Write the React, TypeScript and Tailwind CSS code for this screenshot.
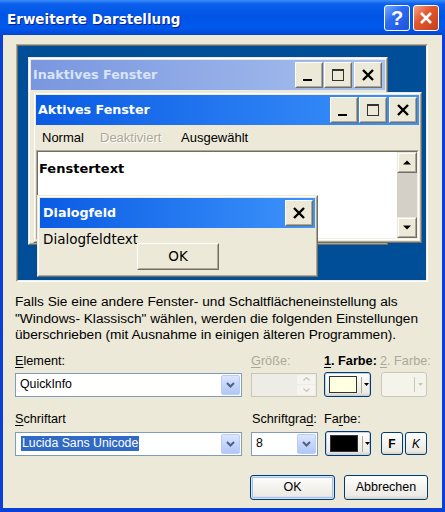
import React from "react";

const DV = "font-['DejaVu_Sans',Verdana,sans-serif]";

function CapBtn({ kind }: { kind: "min" | "max" | "close" }) {
  return (
    <div className="w-[28px] h-[26px] border border-white border-r-[#716F64] border-b-[#716F64]">
      <div className="w-full h-full border border-[#ECE9D8] border-r-[#ACA899] border-b-[#ACA899] bg-[#ECE9D8] flex items-center justify-center">
        <svg width="14" height="14" viewBox="0 0 14 14">
          {kind === "min" && <rect x="1" y="11" width="9" height="2" fill="#000" />}
          {kind === "max" && (
            <>
              <rect x="1.5" y="1.5" width="11" height="11" fill="none" stroke="#333" strokeWidth="1" />
              <rect x="1" y="1" width="12" height="2" fill="#333" />
            </>
          )}
          {kind === "close" && <path d="M2 2L12 12M12 2L2 12" stroke="#000" strokeWidth="2.4" />}
        </svg>
      </div>
    </div>
  );
}

function Frame({ pos, children }: { pos: string; children: React.ReactNode }) {
  return (
    <div className={`absolute ${pos} border border-[#ECE9D8] border-r-[#716F64] border-b-[#716F64]`}>
      <div className="h-full border border-white border-r-[#ACA899] border-b-[#ACA899] bg-[#ECE9D8] p-[1px] flex flex-col">
        {children}
      </div>
    </div>
  );
}

function ScrollBtn({ up }: { up?: boolean }) {
  return (
    <div className="w-[20px] h-[21px] border border-[#ECE9D8] border-r-[#716F64] border-b-[#716F64]">
      <div className="w-full h-full border border-white border-r-[#ACA899] border-b-[#ACA899] bg-[#ECE9D8] flex items-center justify-center">
        <svg width="8" height="5" viewBox="0 0 8 5">
          {up ? <path d="M0 4.5L4 0.5L8 4.5Z" fill="#000" /> : <path d="M0 0.5L4 4.5L8 0.5Z" fill="#000" />}
        </svg>
      </div>
    </div>
  );
}

function DropBtn() {
  return (
    <div className="w-[19px] h-full rounded-[2px] border border-[#BBCDF6] bg-[linear-gradient(180deg,#DCE6FE_0%,#C4D5FB_50%,#B3C7F6_100%)] flex items-center justify-center">
      <svg width="9" height="6" viewBox="0 0 9 6">
        <path d="M1 1L4.5 4.5L8 1" fill="none" stroke="#4D6185" strokeWidth="2" />
      </svg>
    </div>
  );
}

function Combo({ w, children }: { w: string; children: React.ReactNode }) {
  return (
    <div className={`${w} h-[24px] border border-[#7F9DB9] bg-white flex items-stretch p-[1px] text-[12.3px]`}>
      <div className="flex-1 pl-[3px] flex items-center">{children}</div>
      <DropBtn />
    </div>
  );
}

function XpBtn({ w, h, children, def }: { w: string; h: string; children: React.ReactNode; def?: boolean }) {
  return (
    <div
      className={`${w} ${h} rounded-[3px] border border-[#003C74] bg-[linear-gradient(180deg,#FFFFFF_0%,#F4F3EE_45%,#ECEBE6_85%,#D6D0C5_100%)] flex items-center justify-center ${
        def ? "shadow-[inset_0_0_0_1px_#CEE7FF,inset_0_0_0_2px_#A5C0EE]" : ""
      }`}
    >
      {children}
    </div>
  );
}

function ColorBtn({ w, color, disabled }: { w: string; color?: string; disabled?: boolean }) {
  if (disabled) {
    return (
      <div className={`${w} h-[25px] rounded-[3px] border border-[#C9C7BA] bg-[#F5F4EA] flex items-center justify-end pr-[3px]`}>
        <div className="w-px h-[15px] bg-[#C9C7BA] mr-[3px]" />
        <svg width="5" height="3" viewBox="0 0 5 3">
          <path d="M0 0L5 0L2.5 3Z" fill="#C9C7BA" />
        </svg>
      </div>
    );
  }
  return (
    <div className={`${w} h-[25px] rounded-[3px] border border-[#003C74] bg-[linear-gradient(180deg,#FFFFFF_0%,#F4F3EE_45%,#ECEBE6_85%,#D6D0C5_100%)] shadow-[inset_0_0_0_1px_#C8D2E4] flex items-center pl-[4px]`}>
      <div className="w-[28px] h-[17px] border border-[#333]" style={{ background: color }} />
      <div className="w-px h-[16px] bg-[#ACA899] ml-[4px] mr-[2px]" />
      <svg width="5" height="3" viewBox="0 0 5 3">
        <path d="M0 0L5 0L2.5 3Z" fill="#000" />
      </svg>
    </div>
  );
}

const U = ({ children }: { children: React.ReactNode }) => <span className="underline underline-offset-[2px]">{children}</span>;

export default function App() {
  return (
    <div className="w-[445px] h-[512px] flex flex-col bg-[#0A3FD8] font-['Liberation_Sans',Arial,sans-serif] text-[13px] text-black overflow-hidden">
      {/* Title bar */}
      <div className="h-[35px] shrink-0 flex items-center pl-[7px] pr-[6px] bg-[linear-gradient(180deg,#3A8CF9_0%,#0A5FEC_12%,#0055E5_45%,#0058EC_80%,#0048D4_100%)]">
        <span className={`${DV} flex-1 mt-[3px] text-white font-bold text-[13.5px] [text-shadow:1px_1px_0_#0A1E8C]`}>Erweiterte Darstellung</span>
        <div className="flex gap-[3px]">
          <div className="w-[26px] h-[26px] rounded-[3px] border border-white bg-[linear-gradient(135deg,#7AAEFF_0%,#2E6CF2_40%,#1C52DA_100%)] flex items-center justify-center">
            <span className="text-white font-bold text-[20px] leading-none">?</span>
          </div>
          <div className="w-[26px] h-[26px] rounded-[3px] border border-white bg-[linear-gradient(135deg,#F5A585_0%,#E3582F_40%,#C53F1A_100%)] flex items-center justify-center">
            <svg width="14" height="14" viewBox="0 0 14 14">
              <path d="M2 2L12 12M12 2L2 12" stroke="#fff" strokeWidth="2.6" />
            </svg>
          </div>
        </div>
      </div>

      {/* Body */}
      <div className="flex-1 mx-[3px] mb-[4px] bg-[#ECE9D8] flex flex-col pl-[12px]">
        {/* Preview */}
        <div className="mt-[9px] ml-[1px] w-[412px] h-[238px] border border-[#ACA899] border-r-white border-b-white">
          <div className="relative w-full h-full border border-[#716F64] border-r-[#F1EFE2] border-b-[#F1EFE2] bg-[#004E98]">
            {/* Inactive window */}
            <Frame pos="left-[10px] top-[11px] w-[360px] h-[188px]">
              <div className="h-[30px] flex items-center pl-[2px] pr-[3px] bg-[linear-gradient(90deg,#7A96DF,#A8C2EF)]">
                <span className={`${DV} flex-1 font-bold text-[12.7px] text-[#D8E4F8]`}>Inaktives Fenster</span>
                <div className="flex items-center">
                  <CapBtn kind="min" />
                  <div className="ml-[1px]"><CapBtn kind="max" /></div>
                  <div className="ml-[2px]"><CapBtn kind="close" /></div>
                </div>
              </div>
            </Frame>

            {/* Active window */}
            <Frame pos="left-[15px] top-[46px] w-[389px] h-[151px]">
              <div className="h-[30px] flex items-center pl-[2px] pr-[2px] bg-[linear-gradient(90deg,#0A5BE3,#3E94FC)]">
                <span className={`${DV} flex-1 font-bold text-[12.7px] text-white`}>Aktives Fenster</span>
                <div className="flex items-center">
                  <CapBtn kind="min" />
                  <div className="ml-[1px]"><CapBtn kind="max" /></div>
                  <div className="ml-[2px]"><CapBtn kind="close" /></div>
                </div>
              </div>
              <div className="h-[25px] flex items-center pl-[6px]">
                <span className="w-[58px]">Normal</span>
                <span className="w-[81px] text-[#ACA899] [text-shadow:1px_1px_0_#fff]">Deaktiviert</span>
                <span>Ausgewählt</span>
              </div>
              <div className="flex-1 border border-[#ACA899] border-r-white border-b-white">
                <div className="h-full border border-[#716F64] border-r-[#F1EFE2] border-b-[#F1EFE2] bg-white flex">
                  <div className={`${DV} flex-1 pl-[1px] pt-[7px] font-bold text-[13px]`}>Fenstertext</div>
                  <div className="w-[20px] flex flex-col bg-[#D4D0C8]">
                    <ScrollBtn up />
                    <div className="flex-1" />
                    <ScrollBtn />
                  </div>
                </div>
              </div>
            </Frame>

            {/* Dialog */}
            <Frame pos="left-[19px] top-[149px] w-[281px] h-[82px]">
              <div className="h-[30px] flex items-center pl-[3px] pr-[2px] bg-[linear-gradient(90deg,#0A5BE3,#3E94FC)]">
                <span className={`${DV} flex-1 font-bold text-[12.7px] text-white`}>Dialogfeld</span>
                <CapBtn kind="close" />
              </div>
              <div className="flex-1 flex flex-col items-start pl-[3px] pt-[3px]">
                <span className={`${DV} text-[13.5px] leading-[17px]`}>Dialogfeldtext</span>
                <div className="relative -mt-[5px] ml-[94px] w-[82px] h-[27px] border border-white border-r-[#716F64] border-b-[#716F64]">
                  <div className="w-full h-full border border-[#ECE9D8] border-r-[#ACA899] border-b-[#ACA899] bg-[#ECE9D8] flex items-center justify-center">
                    <span className={`${DV} text-[13.5px]`}>OK</span>
                  </div>
                </div>
              </div>
            </Frame>
          </div>
        </div>

        {/* Description */}
        <p className="mt-[12px] leading-[16.7px] text-[13.7px]">
          Falls Sie eine andere Fenster- und Schaltflächeneinstellung als
          <br />
          "Windows- Klassisch" wählen, werden die folgenden Einstellungen
          <br />
          überschrieben (mit Ausnahme in einigen älteren Programmen).
        </p>

        {/* Row 1 labels */}
        <div className="mt-[9px] flex leading-[16px] text-[12.7px]">
          <span className="w-[236px]"><U>E</U>lement:</span>
          <span className="w-[73px] text-[#ACA899]"><U>G</U>röße:</span>
          <span className="w-[56px] font-bold"><U>1</U>. Farbe:</span>
          <span className="text-[#ACA899]"><U>2</U>. Farbe:</span>
        </div>
        {/* Row 1 controls */}
        <div className="mt-[3px] flex items-center">
          <Combo w="w-[227px]">
            <span>QuickInfo</span>
          </Combo>
          <div className="ml-[9px] w-[66px] h-[24px] border border-[#C9C7BA] bg-[#EEEDE5] flex justify-end p-[1px]">
            <div className="w-[18px] flex flex-col gap-[1px]">
              <div className="flex-1 rounded-[1px] bg-[#F5F4EF] flex items-center justify-center">
                <svg width="7" height="4" viewBox="0 0 7 4"><path d="M0.5 3.5L3.5 0.5L6.5 3.5" fill="none" stroke="#C9C7BA" strokeWidth="1.2" /></svg>
              </div>
              <div className="flex-1 rounded-[1px] bg-[#F5F4EF] flex items-center justify-center">
                <svg width="7" height="4" viewBox="0 0 7 4"><path d="M0.5 0.5L3.5 3.5L6.5 0.5" fill="none" stroke="#C9C7BA" strokeWidth="1.2" /></svg>
              </div>
            </div>
          </div>
          <div className="ml-[7px]">
            <ColorBtn w="w-[47px]" color="#FFFFE1" />
          </div>
          <div className="ml-[10px]">
            <ColorBtn w="w-[46px]" disabled />
          </div>
        </div>

        {/* Row 2 labels */}
        <div className="mt-[14px] flex leading-[16px] text-[12.7px]">
          <span className="w-[237px]"><U>S</U>chriftart</span>
          <span className="w-[72px]">Schriftgra<U>d</U>:</span>
          <span>Fa<U>r</U>be:</span>
        </div>
        {/* Row 2 controls */}
        <div className="mt-[4px] flex items-center">
          <Combo w="w-[227px]">
            <span className="ml-[1px] px-[1px] bg-[#316AC5] text-white leading-[15px]">Lucida Sans Unicode</span>
          </Combo>
          <div className="ml-[9px]">
            <Combo w="w-[67px]">
              <span>8</span>
            </Combo>
          </div>
          <div className="ml-[7px]">
            <ColorBtn w="w-[46px]" color="#000000" />
          </div>
          <div className="ml-[10px]">
            <XpBtn w="w-[22px]" h="h-[23px]">
              <span className="font-bold text-[12px]">F</span>
            </XpBtn>
          </div>
          <div className="ml-[2px]">
            <XpBtn w="w-[22px]" h="h-[23px]">
              <span className="italic text-[12px]">K</span>
            </XpBtn>
          </div>
        </div>

        {/* Buttons */}
        <div className="mt-[19px] flex justify-end gap-[9px] pr-[14px] text-[12.5px]">
          <XpBtn w="w-[85px]" h="h-[25px]" def>
            <span>OK</span>
          </XpBtn>
          <XpBtn w="w-[84px]" h="h-[25px]">
            <span>Abbrechen</span>
          </XpBtn>
        </div>
      </div>
    </div>
  );
}
